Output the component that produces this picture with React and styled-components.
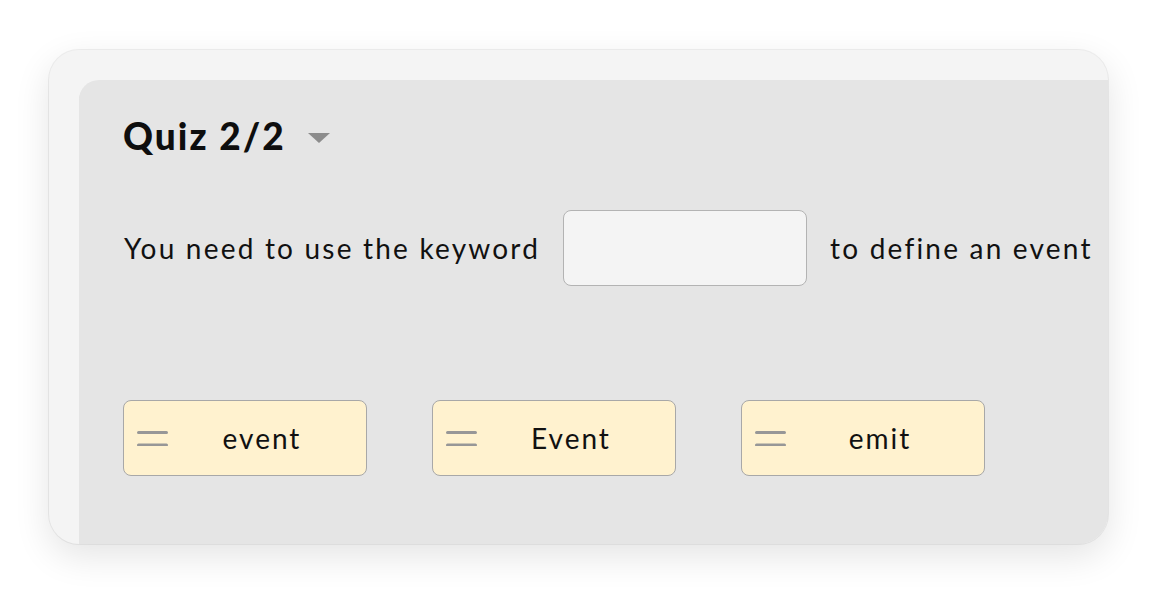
import React from "react";
import styled, { createGlobalStyle } from "styled-components";

const GlobalStyle = createGlobalStyle`
    html, body {
        margin: 0;
        padding: 0;
        background: #ffffff;
    }
    body {
        font-family: Lato, "Open Sans", sans-serif;
        color: #111111;
    }
`;

const options = ["event", "Event", "emit"];

function DragHandle() {
    return (
        <svg width="31" height="16" viewBox="0 0 31 16">
            <path d="M1.5 2.5 H29.5 M1.5 15 H29.5" stroke="#979797" strokeWidth="3" strokeLinecap="round" />
        </svg>
    );
}

export default function App() {
    return (
        <>
            <GlobalStyle />
            <Page>
                <Card>
                    <Panel>
                        <TitleRow>
                            <Title>Quiz 2/2</Title>
                            <Caret />
                        </TitleRow>
                        <Sentence>
                            <span>You need to use the keyword</span>
                            <Blank />
                            <span>to define an event</span>
                        </Sentence>
                        <Choices>
                            {options.map((o) => (
                                <Chip key={o}>
                                    <DragHandle />
                                    <ChipLabel>{o}</ChipLabel>
                                </Chip>
                            ))}
                        </Choices>
                    </Panel>
                </Card>
            </Page>
        </>
    );
}

const Page = styled.div`
    width: 1158px;
    height: 594px;
    box-sizing: border-box;
    padding: 50px 50px 50px 49px;
`;

const Card = styled.div`
    width: 1059px;
    height: 494px;
    box-sizing: border-box;
    padding: 30px 0 0 30px;
    display: flex;
    background: #f4f4f4;
    border-radius: 30px;
    overflow: hidden;
    box-shadow: 0 0 0 1px rgba(0, 0, 0, 0.06), 0 12px 36px rgba(0, 0, 0, 0.11);
`;

const Panel = styled.div`
    flex: 1;
    background: #e5e5e5;
    border-top-left-radius: 20px;
    padding: 36px 0 0 44px;
    box-shadow: 0 1px 0 #dadada;
`;

const TitleRow = styled.div`
    display: flex;
    align-items: center;
    gap: 22px;
`;

const Title = styled.h2`
    margin: 0;
    font-size: 37px;
    line-height: 40px;
    font-weight: 900;
    letter-spacing: 2px;
    color: #0e0e0e;
`;

const Caret = styled.span`
    width: 0;
    height: 0;
    margin-top: 4px;
    border-left: 11px solid transparent;
    border-right: 11px solid transparent;
    border-top: 10px solid #8c8c8c;
`;

const Sentence = styled.div`
    display: flex;
    align-items: center;
    gap: 23px;
    margin-top: 54px;
    padding-left: 1px;
    font-size: 28px;
    line-height: 34px;
    letter-spacing: 2.2px;
    color: #111111;
`;

const Blank = styled.div`
    width: 244px;
    height: 76px;
    box-sizing: border-box;
    background: #f4f4f4;
    border: 1.5px solid #b3b3b3;
    border-radius: 8px;
`;

const Choices = styled.div`
    display: flex;
    gap: 65px;
    margin-top: 114px;
`;

const Chip = styled.div`
    width: 244px;
    height: 76px;
    box-sizing: border-box;
    display: flex;
    align-items: center;
    padding: 0 12px 0 13px;
    background: #fff2cf;
    border: 1.5px solid #a8a8a8;
    border-radius: 8px;
`;

const ChipLabel = styled.span`
    flex: 1;
    text-align: center;
    padding-left: 2px;
    font-size: 28px;
    line-height: 34px;
    letter-spacing: 2px;
    color: #111111;
`;
